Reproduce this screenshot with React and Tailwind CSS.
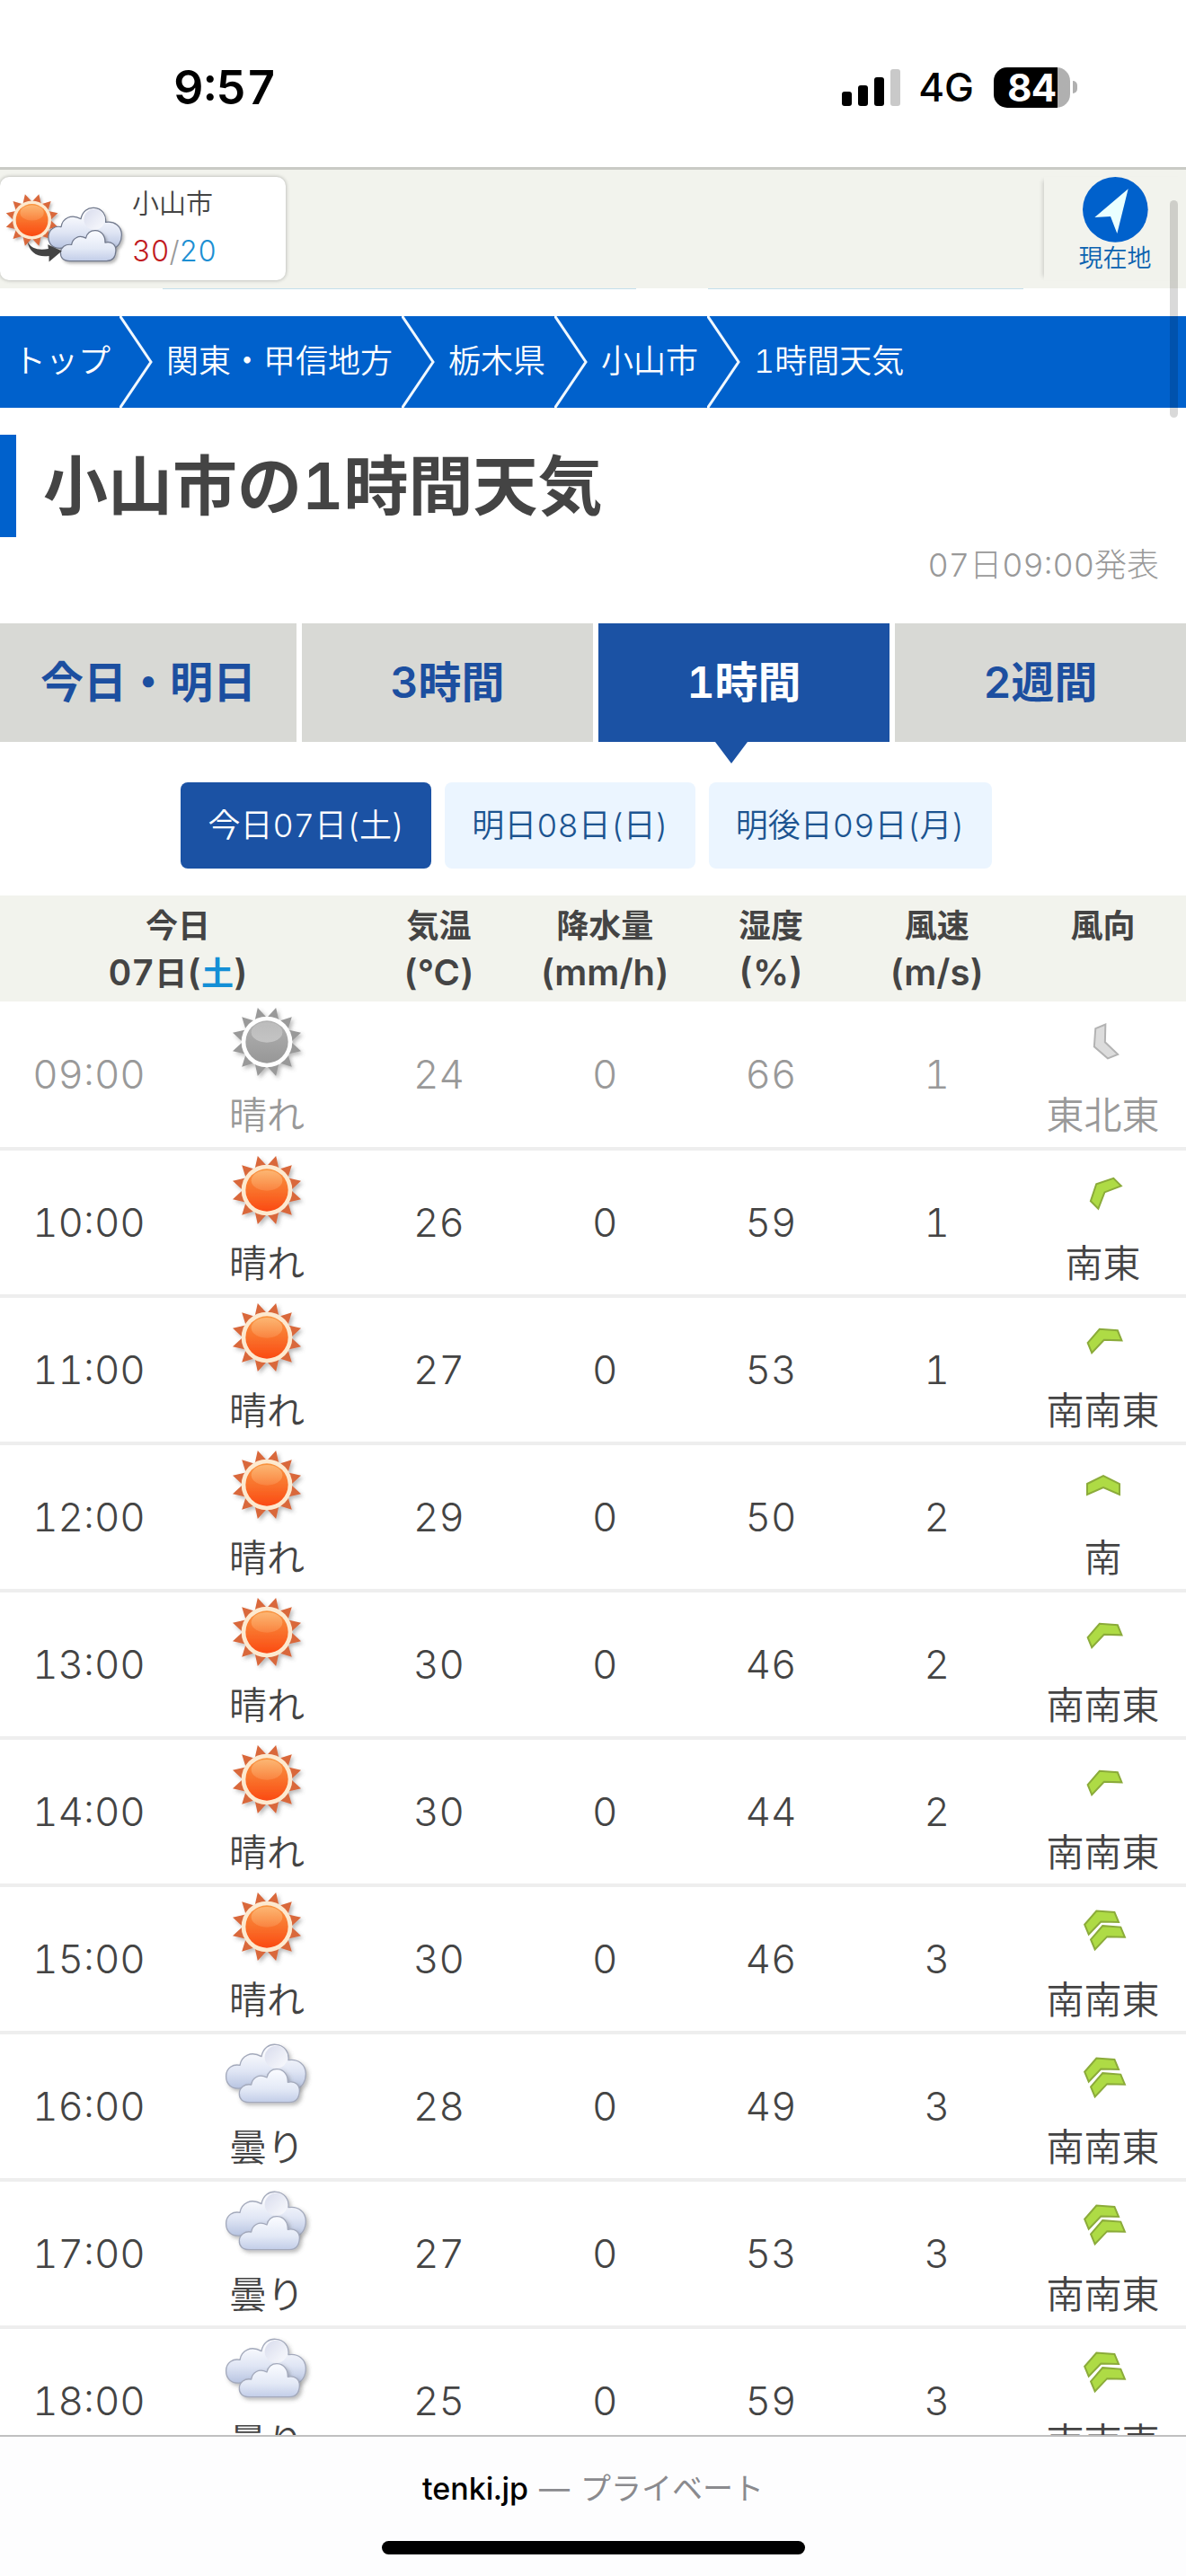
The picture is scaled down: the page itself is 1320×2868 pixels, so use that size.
const breadcrumbs = ['トップ', '関東・甲信地方', '栃木県', '小山市', '1時間天気'];

const tabs = [
  { label: '今日・明日', active: false },
  { label: '3時間', active: false },
  { label: '1時間', active: true },
  { label: '2週間', active: false },
];

const days = [
  { label: '今日07日(土)', active: true },
  { label: '明日08日(日)', active: false },
  { label: '明後日09日(月)', active: false },
];

const columns = [
  ['気温', '(℃)'],
  ['降水量', '(mm/h)'],
  ['湿度', '(%)'],
  ['風速', '(m/s)'],
  ['風向', ''],
];

const hours = [
  { time: '09:00', weather: '晴れ', temp: 24, rain: 0, humidity: 66, wind: 1, dir: '東北東', past: true },
  { time: '10:00', weather: '晴れ', temp: 26, rain: 0, humidity: 59, wind: 1, dir: '南東' },
  { time: '11:00', weather: '晴れ', temp: 27, rain: 0, humidity: 53, wind: 1, dir: '南南東' },
  { time: '12:00', weather: '晴れ', temp: 29, rain: 0, humidity: 50, wind: 2, dir: '南' },
  { time: '13:00', weather: '晴れ', temp: 30, rain: 0, humidity: 46, wind: 2, dir: '南南東' },
  { time: '14:00', weather: '晴れ', temp: 30, rain: 0, humidity: 44, wind: 2, dir: '南南東' },
  { time: '15:00', weather: '晴れ', temp: 30, rain: 0, humidity: 46, wind: 3, dir: '南南東' },
  { time: '16:00', weather: '曇り', temp: 28, rain: 0, humidity: 49, wind: 3, dir: '南南東' },
  { time: '17:00', weather: '曇り', temp: 27, rain: 0, humidity: 53, wind: 3, dir: '南南東' },
  { time: '18:00', weather: '曇り', temp: 25, rain: 0, humidity: 59, wind: 3, dir: '南南東' },
];

const angles = { 南: 0, 南南東: -22.5, 南東: -45, 東北東: -112.5 };

// twelve rays around the disc, none of them pointing straight up
const rays = Array.from({ length: 12 }, (_, i) => 15 + i * 30);

function Gradients() {
  return (
    <svg className="absolute h-0 w-0" aria-hidden="true">
      <defs>
        <linearGradient id="sunDisc" x1="0" y1="0" x2="0" y2="1">
          <stop offset="0" stopColor="#f9943f" />
          <stop offset="0.5" stopColor="#f9722c" />
          <stop offset="1" stopColor="#fb4a12" />
        </linearGradient>
        <linearGradient id="sunGloss" x1="0" y1="0" x2="0" y2="1">
          <stop offset="0" stopColor="#ffd9a8" stopOpacity="0.5" />
          <stop offset="1" stopColor="#ffc890" stopOpacity="0.2" />
        </linearGradient>
        <linearGradient id="sunGlossGray" x1="0" y1="0" x2="0" y2="1">
          <stop offset="0" stopColor="#fff" stopOpacity="0.15" />
          <stop offset="1" stopColor="#fff" stopOpacity="0.35" />
        </linearGradient>
        <linearGradient id="sunDiscGray" x1="0" y1="0" x2="0" y2="1">
          <stop offset="0" stopColor="#b2b2b2" />
          <stop offset="1" stopColor="#979797" />
        </linearGradient>
        <linearGradient id="cloudBack" x1="0" y1="0" x2="0" y2="1">
          <stop offset="0.2" stopColor="#f8f9fd" />
          <stop offset="0.6" stopColor="#dfe5f4" />
          <stop offset="1" stopColor="#b5c2e0" />
        </linearGradient>
        <linearGradient id="cloudPuff" x1="0" y1="0" x2="1" y2="1">
          <stop offset="0.2" stopColor="#dfe2f0" />
          <stop offset="1" stopColor="#fafbfe" />
        </linearGradient>
        <linearGradient id="cloudFront" x1="0" y1="0" x2="0" y2="1">
          <stop offset="0.1" stopColor="#f7f9fe" />
          <stop offset="0.6" stopColor="#e3e9f6" />
          <stop offset="1" stopColor="#c2cde8" />
        </linearGradient>
        <filter id="soft" x="-20%" y="-20%" width="150%" height="150%">
          <feDropShadow dx="7" dy="8" stdDeviation="6" floodColor="#555" floodOpacity="0.4" />
        </filter>
      </defs>
    </svg>
  );
}

function SunShape({ gray }) {
  return (
    <g filter="url(#soft)">
      {rays.map((a) => (
        <path key={a} d="M-22 -76 L0 -118 L22 -76 Z" transform={`rotate(${a})`} fill={gray ? '#999' : '#d9673a'} />
      ))}
      <circle r="85" fill={gray ? '#fff' : '#fde9cf'} />
      <circle r="71" fill={gray ? 'url(#sunDiscGray)' : 'url(#sunDisc)'} />
      <ellipse cy="-32" rx="52" ry="34" fill={gray ? 'url(#sunGlossGray)' : 'url(#sunGloss)'} />
    </g>
  );
}

function CloudShape({ stroke }) {
  return (
    <g stroke={stroke} strokeWidth="4" strokeLinejoin="round">
      <path
        filter="url(#soft)"
        fill="url(#cloudBack)"
        d="M84 180 C50 184 34 164 35 138 C36 112 58 98 81 103 C86 72 118 54 153 74 C158 46 178 32 201 34 C230 36 246 60 243 86 C276 80 300 102 301 130 C302 158 288 178 266 184 Z"
      />
      <circle cx="202" cy="76" r="38" fill="url(#cloudPuff)" stroke="none" />
      <path
        filter="url(#soft)"
        fill="url(#cloudFront)"
        d="M112 227 C88 227 78 214 79 196 C80 178 96 164 119 168 C122 146 144 130 171 144 C174 126 188 115 206 116 C228 117 242 136 241 160 C266 154 281 170 280 190 C279 214 266 227 246 227 Z"
      />
    </g>
  );
}

function WeatherIcon({ kind, gray }) {
  return (
    <svg viewBox="-9 0 360 270" className="h-[90px] w-[120px]" aria-hidden="true">
      {kind === '晴れ' ? (
        <g transform="translate(171 132)">
          <SunShape gray={gray} />
        </g>
      ) : (
        <CloudShape stroke="#a3a9bb" />
      )}
    </svg>
  );
}

function WindIcon({ dir, speed, gray }) {
  const offsets = speed >= 3 ? [-9, 9] : [0];
  return (
    <svg viewBox="-60 -45 120 90" className="h-[90px] w-[120px]" aria-hidden="true">
      <g
        transform={`rotate(${angles[dir]})`}
        fill={gray ? '#dcdcdc' : '#aedb45'}
        stroke={gray ? '#b3b3b3' : '#8bab3a'}
        strokeWidth="2"
      >
        {offsets.map((y) => (
          <path key={y} d="M-18 -2 L0 -11 L18 -2 L18 10 L0 2 L-18 10 Z" transform={`translate(0 ${y})`} />
        ))}
      </g>
    </svg>
  );
}

function StatusBar() {
  return (
    <div className="flex h-[186px] shrink-0 items-start justify-between pt-[66px] pr-[121px] pl-[193px] text-black">
      <span className="text-[52px] leading-[64px] font-semibold">9:57</span>
      <div className="flex h-[62px] items-center">
        <svg viewBox="0 0 66 42" className="h-[42px] w-[66px]" aria-hidden="true">
          <rect x="0" y="26" width="11" height="16" rx="3" />
          <rect x="18" y="19" width="11" height="23" rx="3" />
          <rect x="36" y="10" width="11" height="32" rx="3" />
          <rect x="54" y="1" width="11" height="41" rx="3" fill="#c9c9c9" />
        </svg>
        <span className="mr-[22px] ml-5 text-[44px] leading-[60px] font-medium">4G</span>
        <div className="flex h-[45px] w-[85px] items-center justify-center rounded-[15px] bg-linear-to-r from-black from-[84%] to-[#b0b0b0] to-[84%]">
          <span className="text-[42px] leading-[45px] font-bold text-white">84</span>
        </div>
        <div className="ml-[3px] h-[14px] w-[5px] rounded-r-full bg-[#b0b0b0]" />
      </div>
    </div>
  );
}

function PlaceBar() {
  return (
    <div className="flex h-[135px] shrink-0 items-start justify-between border-t-[3px] border-[#c9cac5] bg-[#f2f3ed]">
      <a href="#place" className="mt-2 flex h-[115px] w-[318px] items-center rounded-[10px] bg-white shadow-[0_0_4px_rgba(0,0,0,0.3)]">
        <svg viewBox="0 0 430 345" className="h-[115px] w-[143px]" aria-hidden="true">
          <g transform="translate(107 144) scale(0.76)">
            <SunShape />
          </g>
          <g transform="translate(130 72) scale(0.92)">
            <CloudShape stroke="#70788c" />
          </g>
          <path d="M92 216 C104 240 130 246 162 240 L160 226 L207 248 L164 284 L164 264 C126 270 98 252 92 216 Z" fill="#444" />
        </svg>
        <span className="ml-1 flex flex-col pb-1 text-[30px] leading-[53px] font-[350] text-[#444]">
          <span>小山市</span>
          <span className="text-[32px] text-[#999]">
            <span className="text-[#c11920]">30</span>/<span className="text-[#1c8fd3]">20</span>
          </span>
        </span>
      </a>
      <button className="mt-2 flex h-[115px] w-[158px] flex-col items-center shadow-[-5px_0_5px_-4px_rgba(0,0,0,0.18)]">
        <svg viewBox="0 0 219 219" className="h-[73px] w-[73px]" aria-hidden="true">
          <circle cx="109" cy="109" r="109" fill="#0061cc" />
          <path d="M152 40 L40 135 L93 132 L115 189 Z" fill="#eaffff" />
        </svg>
        <span className="text-[27px] leading-[36px] font-[350] text-[#0c62b0]">現在地</span>
      </button>
    </div>
  );
}

function Breadcrumbs() {
  return (
    <nav className="mt-[30px] flex h-[102px] items-stretch bg-[#0061cc] text-[36px] leading-[100px] font-[350] text-white">
      {breadcrumbs.map((name, i) => (
        <div key={name} className="flex pl-[15px]">
          <a href={`#crumb${i}`}>{name}</a>
          {i < breadcrumbs.length - 1 && (
            <svg viewBox="0 0 37 102" className="ml-[10px] h-[102px] w-[37px]" fill="none" stroke="#f0f8ff" strokeWidth="3" aria-hidden="true">
              <path d="M0 -1 L35 51 L0 103" />
            </svg>
          )}
        </div>
      ))}
    </nav>
  );
}

function Tabs() {
  return (
    <nav className="mt-[38px] grid grid-cols-4">
      {tabs.map((tab, i) => (
        <a
          key={tab.label}
          href={`#tab${i}`}
          className={
            'relative flex h-[132px] items-center justify-center border-white text-[48px] font-semibold ' +
            (i > 0 ? 'border-l-[6px] ' : '') +
            (tab.active ? 'bg-[#1b52a4] text-white' : 'bg-[#d8d9d5] text-[#1c4fa0]')
          }
        >
          {tab.label}
          {tab.active && (
            <span className="absolute top-full left-[130px] h-[24px] w-[36px] bg-[#1b52a4] [clip-path:polygon(0_0,100%_0,50%_100%)]" />
          )}
        </a>
      ))}
    </nav>
  );
}

function DayButtons() {
  return (
    <div className="mt-[45px] flex justify-center gap-[15px] pr-[15px]">
      {days.map((day) => (
        <button
          key={day.label}
          className={
            'h-24 rounded-lg px-[30px] text-[36px] font-[350] ' +
            (day.active ? 'bg-[#1b52a4] text-white' : 'bg-[#ebf5ff] text-[#1c5490]')
          }
        >
          {day.label}
        </button>
      ))}
    </div>
  );
}

function HourTable() {
  return (
    <table className="mt-[30px] w-full table-fixed border-collapse text-center text-[#444]">
      <colgroup>
        <col className="w-[15%]" />
        <col className="w-[15%]" />
        <col className="w-[14%]" />
        <col className="w-[14%]" />
        <col className="w-[14%]" />
        <col className="w-[14%]" />
        <col className="w-[14%]" />
      </colgroup>
      <thead className="bg-[#f2f3ed] text-[36px] leading-[51px]">
        <tr className="h-[118px]">
          <th colSpan={2} className="p-0 pt-[9px] align-top font-semibold">
            <div>今日</div>
            <div className="text-[40px]">
              07<span className="text-[36px]">日</span>(<span className="text-[36px] text-[#148fd6]">土</span>)
            </div>
          </th>
          {columns.map(([name, unit]) => (
            <th key={name} className="p-0 pt-[9px] align-top font-semibold">
              <div>{name}</div>
              <div className="text-[40px]">{unit}</div>
            </th>
          ))}
        </tr>
      </thead>
      <tbody className="text-[44px] font-[350]">
        {hours.map((h) => (
          <tr key={h.time} className={'h-[164px] border-b-4 border-[#eee] ' + (h.past ? 'text-[#999]' : '')}>
            <td className="p-0">{h.time}</td>
            <td className="p-0">
              <div className="flex flex-col items-center">
                <WeatherIcon kind={h.weather} gray={h.past} />
                <span className="pt-1 pb-[3px] text-[42px] leading-[63px]">{h.weather}</span>
              </div>
            </td>
            <td className="p-0">{h.temp}</td>
            <td className="p-0">{h.rain}</td>
            <td className="p-0">{h.humidity}</td>
            <td className="p-0">{h.wind}</td>
            <td className="p-0">
              <div className="flex flex-col items-center">
                <WindIcon dir={h.dir} speed={h.wind} gray={h.past} />
                <span className="pt-1 pb-[3px] text-[42px] leading-[63px]">{h.dir}</span>
              </div>
            </td>
          </tr>
        ))}
      </tbody>
    </table>
  );
}

function AddressBar() {
  return (
    <footer className="flex h-[157px] shrink-0 flex-col items-center justify-between border-t-2 border-[#c0c0c0] bg-[#fdfdfe] pt-[34px] pb-6">
      <p className="flex gap-3 text-[34px] leading-[48px] text-[#8a8a8e]">
        <span className="font-medium text-black">tenki.jp</span>
        <span>—</span>
        <span>プライベート</span>
      </p>
      <div className="h-[15px] w-[471px] rounded-full bg-black" />
    </footer>
  );
}

export default function App() {
  return (
    <div className="flex h-screen flex-col overflow-hidden bg-white font-['Inter','Noto_Sans_CJK_JP',sans-serif] tabular-nums">
      <Gradients />
      <StatusBar />
      <PlaceBar />
      <main className="min-h-0 flex-1 overflow-y-auto [scrollbar-width:none]">
        {/* bottom edge of the banner scrolled under the place bar */}
        <div className="flex gap-20 px-[181px]">
          <div className="h-px flex-3 bg-[#c4dfeb]" />
          <div className="h-px flex-2 bg-[#c4dfeb]" />
        </div>
        <Breadcrumbs />
        <div className="mt-[30px] border-l-[18px] border-[#0061cc] pl-[30px]">
          <h1 className="text-[72px] leading-[114px] font-semibold text-[#444]">小山市の1時間天気</h1>
        </div>
        <p className="mt-1 pr-[30px] text-right text-[36px] leading-[54px] font-light text-[#999]">07日09:00発表</p>
        <Tabs />
        <DayButtons />
        <HourTable />
      </main>
      <AddressBar />
      <div className="fixed top-[223px] right-[9px] h-[242px] w-[9px] rounded-full bg-black/15" />
    </div>
  );
}
